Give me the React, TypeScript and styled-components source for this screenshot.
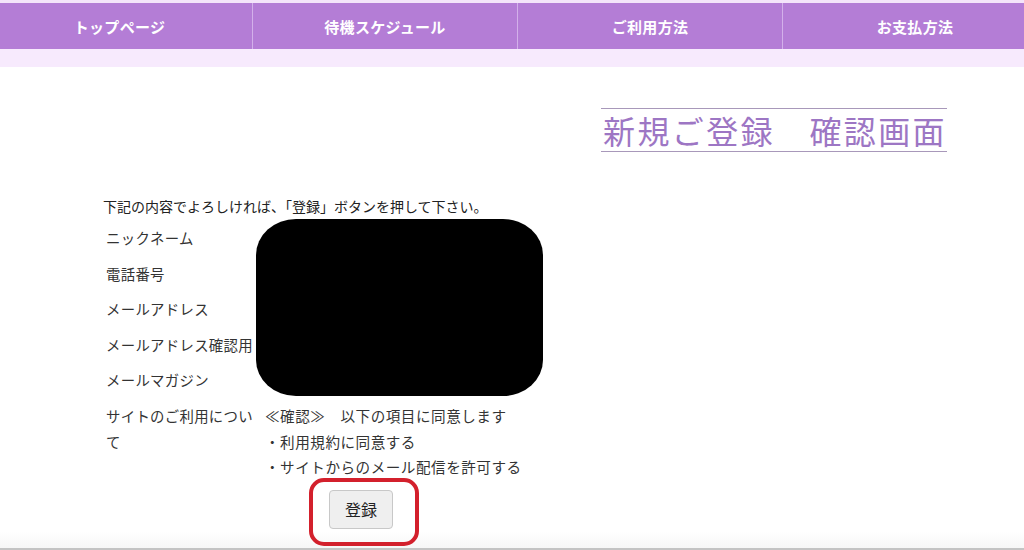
import React from "react";
import styled, { createGlobalStyle } from "styled-components";

const GlobalStyle = createGlobalStyle`
  html, body {
    margin: 0;
    padding: 0;
    background: #ffffff;
    overflow: hidden;
  }
  body {
    font-family: "Noto Sans CJK JP", "Noto Sans", sans-serif;
    color: #222222;
  }
  * { box-sizing: border-box; }
`;

const Page = styled.div`
  width: 1024px;
  height: 550px;
  display: flex;
  flex-direction: column;
  overflow: hidden;
`;

const TopStrip = styled.div`
  height: 3px;
  background: #f4e4fa;
  flex: none;
`;

const Nav = styled.nav`
  flex: none;
  height: 46px;
  margin-left: -13px;
  width: 1060px;
  display: grid;
  grid-template-columns: repeat(4, 265px);
  background: #b47dd6;
`;

const NavItem = styled.a<{ $first?: boolean }>`
  display: flex;
  align-items: center;
  justify-content: center;
  color: #ffffff;
  font-weight: 700;
  font-size: 15px;
  letter-spacing: 0.3px;
  text-decoration: none;
  border-left: ${(p) => (p.$first ? "none" : "1px solid #d3b0ea")};
`;

const SubBand = styled.div`
  flex: none;
  height: 18px;
  background: #f7eafd;
`;

const Main = styled.main`
  flex: 1;
  display: flex;
  flex-direction: column;
  border-bottom: 2px solid #c4c4c4;
  background: linear-gradient(to bottom, #ffffff 0, #ffffff calc(100% - 16px), #f7f7f7 100%);
`;

const TitleRow = styled.div`
  display: flex;
  justify-content: flex-end;
  padding-right: 77px;
  margin-top: 41px;
`;

const Title = styled.h1`
  margin: 0;
  padding: 0 0 0 2px;
  border-top: 1px solid #a898ba;
  border-bottom: 1px solid #a898ba;
  line-height: 42px;
  font-size: 32px;
  font-weight: 400;
  letter-spacing: 2.4px;
  color: #9d76c4;
`;

const Form = styled.section`
  margin-top: 41px;
  margin-left: 103px;
  display: flex;
  flex-direction: column;
`;

const Intro = styled.p`
  margin: 0;
  font-size: 14px;
  line-height: 26px;
  color: #222;
`;

const TableWrap = styled.div`
  position: relative;
  width: 440px;
`;

const Table = styled.div`
  display: grid;
  grid-template-columns: 159px 1fr;
  padding-top: 1px;
`;

const Label = styled.div`
  padding: 5px 9px 5px 3px;
  font-size: 14.4px;
  letter-spacing: 0.3px;
  line-height: 25.6px;
  color: #333;
`;

const Value = styled.div`
  padding: 5px 3px;
  font-size: 14.6px;
  letter-spacing: 0.5px;
  line-height: 25.6px;
  color: #333;
  min-height: 35.6px;
`;

const Line = styled.div`
  white-space: nowrap;
`;

const Redaction = styled.div`
  position: absolute;
  left: 153px;
  top: 0;
  width: 287px;
  height: 177px;
  background: #000;
  border-radius: 40px / 36px;
`;

const ButtonRow = styled.div`
  display: flex;
  padding-left: 226px;
  margin-top: 5px;
`;

const Highlight = styled.div`
  position: relative;
  &::before {
    content: "";
    position: absolute;
    left: -20px;
    top: -12px;
    width: 102px;
    height: 60px;
    border: 4px solid #d3202c;
    border-radius: 15px;
    pointer-events: none;
  }
`;

const SubmitButton = styled.button`
  width: 64px;
  height: 39px;
  background: #efefef;
  border: 1px solid #c8c8c8;
  border-radius: 4px;
  font-family: "Noto Sans CJK JP", sans-serif;
  font-size: 16px;
  color: #222;
  padding: 0;
`;

const navItems = ["トップページ", "待機スケジュール", "ご利用方法", "お支払方法"];
const rows = ["ニックネーム", "電話番号", "メールアドレス", "メールアドレス確認用", "メールマガジン"];

export default function App() {
  return (
    <Page>
      <GlobalStyle />
      <TopStrip />
      <Nav>
        {navItems.map((n, i) => (
          <NavItem key={n} $first={i === 0} href="#">
            {n}
          </NavItem>
        ))}
      </Nav>
      <SubBand />
      <Main>
        <TitleRow>
          <Title>新規ご登録　確認画面</Title>
        </TitleRow>
        <Form>
          <Intro>下記の内容でよろしければ、「登録」ボタンを押して下さい。</Intro>
          <TableWrap>
            <Table>
              {rows.map((r) => (
                <React.Fragment key={r}>
                  <Label>{r}</Label>
                  <Value />
                </React.Fragment>
              ))}
              <Label>サイトのご利用について</Label>
              <Value>
                <Line>≪確認≫　以下の項目に同意します</Line>
                <Line>・利用規約に同意する</Line>
                <Line>・サイトからのメール配信を許可する</Line>
              </Value>
            </Table>
            <Redaction />
          </TableWrap>
          <ButtonRow>
            <Highlight>
              <SubmitButton type="button">登録</SubmitButton>
            </Highlight>
          </ButtonRow>
        </Form>
      </Main>
    </Page>
  );
}
